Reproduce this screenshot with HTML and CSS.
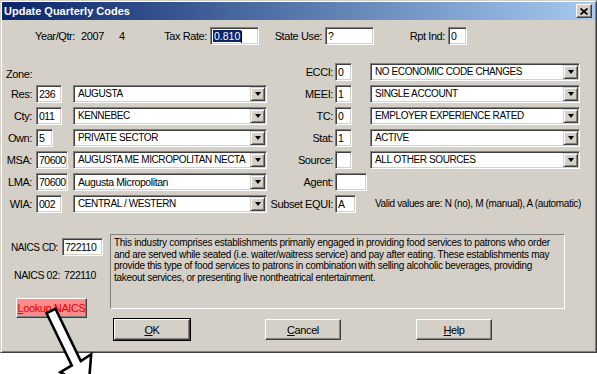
FILE: index.html
```html
<!DOCTYPE html>
<html lang="en">
<head>
    <meta charset="UTF-8">
    <title>Update Quarterly Codes</title>
    <link rel="stylesheet" href="styles.css">
</head>
<body>
    <div class="window">
        <div class="titlebar">
            <span class="title">Update Quarterly Codes</span>
            <span class="close-btn">
                <svg width="8" height="7" viewBox="0 0 8 7"><path d="M0.5 0.5L7.5 6.5M7.5 0.5L0.5 6.5" stroke="#000" stroke-width="1.7"/></svg>
            </span>
        </div>
        <div class="dialog">
            <div class="top-row">
                <span class="yq-label">Year/Qtr:</span>
                <span class="yq-year">2007</span>
                <span class="yq-qtr">4</span>
                <span class="top-label tax-label">Tax Rate:</span>
                <span class="field tax-field"><span class="selected">0.810</span><span class="caret"></span></span>
                <span class="top-label state-label">State Use:</span>
                <span class="field state-field">?</span>
                <span class="top-label rpt-label">Rpt Ind:</span>
                <span class="field rpt-field">0</span>
            </div>

            <div class="codes">
                <div class="zone">Zone:</div>
                <div class="lbl">ECCI:</div>
                <div class="cell"><span class="field w17">0</span></div>
                <div class="combo"><span class="combo-text">NO ECONOMIC CODE CHANGES</span><span class="drop"><i></i></span></div>

                <div class="lbl">Res:</div>
                <div class="cell left"><span class="field w25">236</span></div>
                <div class="combo"><span class="combo-text">AUGUSTA</span><span class="drop"><i></i></span></div>
                <div class="lbl">MEEI:</div>
                <div class="cell"><span class="field w17">1</span></div>
                <div class="combo"><span class="combo-text">SINGLE ACCOUNT</span><span class="drop"><i></i></span></div>

                <div class="lbl">Cty:</div>
                <div class="cell left"><span class="field w25">011</span></div>
                <div class="combo"><span class="combo-text">KENNEBEC</span><span class="drop"><i></i></span></div>
                <div class="lbl">TC:</div>
                <div class="cell"><span class="field w17">0</span></div>
                <div class="combo"><span class="combo-text">EMPLOYER EXPERIENCE RATED</span><span class="drop"><i></i></span></div>

                <div class="lbl">Own:</div>
                <div class="cell left"><span class="field w17">5</span></div>
                <div class="combo"><span class="combo-text">PRIVATE SECTOR</span><span class="drop"><i></i></span></div>
                <div class="lbl">Stat:</div>
                <div class="cell"><span class="field w17">1</span></div>
                <div class="combo"><span class="combo-text">ACTIVE</span><span class="drop"><i></i></span></div>

                <div class="lbl">MSA:</div>
                <div class="cell left"><span class="field w32">70600</span></div>
                <div class="combo"><span class="combo-text">AUGUSTA ME MICROPOLITAN NECTA</span><span class="drop"><i></i></span></div>
                <div class="lbl">Source:</div>
                <div class="cell"><span class="field w17"></span></div>
                <div class="combo"><span class="combo-text">ALL OTHER SOURCES</span><span class="drop"><i></i></span></div>

                <div class="lbl">LMA:</div>
                <div class="cell left"><span class="field w32">70600</span></div>
                <div class="combo"><span class="combo-text mixed">Augusta Micropolitan</span><span class="drop"><i></i></span></div>
                <div class="lbl">Agent:</div>
                <div class="cell"><span class="field w32"></span></div>
                <div></div>

                <div class="lbl">WIA:</div>
                <div class="cell left"><span class="field w25">002</span></div>
                <div class="combo"><span class="combo-text">CENTRAL / WESTERN</span><span class="drop"><i></i></span></div>
                <div class="lbl">Subset EQUI:</div>
                <div class="cell"><span class="field w21">A</span></div>
                <div class="hint">Valid values are: N (no), M (manual), A (automatic)</div>
            </div>

            <div class="naics">
                <div class="naics-side">
                    <div class="naics-cd">
                        <span class="naics-cd-label">NAICS CD:</span>
                        <span class="field naics-field">722110</span>
                    </div>
                    <div class="naics-02">
                        <span class="naics-02-label">NAICS 02:</span>
                        <span>722110</span>
                    </div>
                    <button class="lookup"><u>L</u>ookup NAICS</button>
                </div>
                <div class="naics-main">
                    <div class="desc">This industry comprises establishments primarily engaged in providing food services to patrons who order<br>and are served while seated (i.e. waiter/waitress service) and pay after eating. These establishments may<br>provide this type of food services to patrons in combination with selling alcoholic beverages, providing<br>takeout services, or presenting live nontheatrical entertainment.</div>
                    <div class="buttons">
                        <button class="btn btn-default"><u>O</u>K</button>
                        <button class="btn"><u>C</u>ancel</button>
                        <button class="btn"><u>H</u>elp</button>
                    </div>
                </div>
            </div>
        </div>
    </div>

    <svg class="arrow" width="597" height="374" viewBox="0 0 597 374">
        <polygon points="46.5,313.2 55.5,308.8 80.8,361 91.2,354.2 88.5,388 60.4,372.2 71.8,365.4" fill="#fff" stroke="#000" stroke-width="2.6" stroke-linejoin="miter"/>
    </svg>
</body>
</html>
```

FILE: styles.css
```css
body {
    margin: 0;
    background: #fff;
    font-family: "Liberation Sans", Arial, sans-serif;
    font-size: 11px;
    letter-spacing: -0.4px;
    color: #000;
    position: relative;
    width: 597px;
    height: 374px;
    overflow: hidden;
}
.window {
    width: 597px;
    box-sizing: border-box;
    background: #d4d0c8;
    border: 1px solid;
    border-color: #d4d0c8 #404040 #404040 #d4d0c8;
    box-shadow: inset 1px 1px #fff, inset -1px -1px #808080;
    padding: 1px;
}
.titlebar {
    height: 18px;
    display: flex;
    align-items: center;
    justify-content: space-between;
    background: linear-gradient(to right, #0a246a, #a6caf0);
    padding: 0 3px 0 2px;
}
.title {
    color: #fff;
    font-weight: bold;
    letter-spacing: 0;
}
.close-btn {
    width: 16px;
    height: 14px;
    box-sizing: border-box;
    display: flex;
    align-items: center;
    justify-content: center;
    background: #d4d0c8;
    border: 1px solid;
    border-color: #fff #404040 #404040 #fff;
    box-shadow: inset -1px -1px #808080;
}
.dialog {
    padding: 7px 0 11px 2px;
}

/* sunken edit box */
.field {
    display: block;
    height: 18px;
    box-sizing: border-box;
    background: #fff;
    border: 1px solid;
    border-color: #808080 #fff #fff #808080;
    box-shadow: inset 1px 1px #404040, inset -1px -1px #d4d0c8;
    padding-left: 2px;
    font-size: 10.5px;
    letter-spacing: -0.5px;
    line-height: 16px;
    white-space: nowrap;
    overflow: hidden;
}
.w17 { width: 17px; }
.w21 { width: 21px; }
.w25 { width: 26px; }
.w32 { width: 32px; }

.top-row {
    display: flex;
    align-items: center;
    height: 18px;
}
.yq-label {
    margin-left: 31px;
    width: 46px;
}
.yq-year { width: 38px; }
.yq-qtr { width: 10px; }
.top-label {
    text-align: right;
    box-sizing: border-box;
    padding-right: 3px;
}
.tax-label { width: 81px; }
.tax-field { width: 49px; }
.state-label { width: 66px; }
.state-field { width: 49px; }
.rpt-label { width: 74px; }
.rpt-field { width: 19px; }
.selected {
    background: #0a246a;
    color: #fff;
    padding: 0 1px;
    letter-spacing: 0;
}
.caret {
    display: inline-block;
    width: 1px;
    height: 12px;
    background: #000;
    vertical-align: middle;
}

.codes {
    display: grid;
    grid-template-columns: 30px 39px 194px 68px 35px 210px;
    grid-auto-rows: 18px;
    row-gap: 4px;
    margin-top: 18px;
}
.zone {
    grid-column: span 3;
    align-self: end;
    padding-left: 2px;
    line-height: 14px;
}
.lbl {
    text-align: right;
    padding-right: 2px;
    line-height: 18px;
    white-space: nowrap;
}
.cell.left { padding-left: 2px; }
.combo {
    display: flex;
    height: 18px;
    box-sizing: border-box;
    background: #fff;
    border: 1px solid;
    border-color: #808080 #fff #fff #808080;
    box-shadow: inset 1px 1px #404040, inset -1px -1px #d4d0c8;
    padding: 1px;
}
.combo-text {
    flex: 1;
    padding-left: 3px;
    line-height: 14px;
    font-size: 10px;
    letter-spacing: -0.4px;
    white-space: nowrap;
    overflow: hidden;
}
.combo-text.mixed {
    font-size: 10.5px;
    letter-spacing: -0.4px;
}
.drop {
    width: 15px;
    height: 14px;
    box-sizing: border-box;
    display: flex;
    align-items: center;
    justify-content: center;
    background: #d4d0c8;
    border: 1px solid;
    border-color: #d4d0c8 #404040 #404040 #d4d0c8;
    box-shadow: inset 1px 1px #fff, inset -1px -1px #808080;
}
.drop i {
    width: 0;
    height: 0;
    border-top: 4px solid #000;
    border-left: 3.5px solid transparent;
    border-right: 3.5px solid transparent;
}
.hint {
    padding-left: 5px;
    line-height: 18px;
    font-size: 10px;
    letter-spacing: -0.35px;
    white-space: nowrap;
}

.naics {
    display: flex;
    margin-top: 21px;
}
.naics-side {
    width: 106px;
    font-size: 10.5px;
}
.naics-cd {
    display: flex;
    align-items: center;
    margin-top: 4px;
}
.naics-cd-label {
    width: 58px;
    box-sizing: border-box;
    padding-left: 7px;
    font-size: 10px;
    white-space: nowrap;
}
.naics-field {
    width: 41px;
}
.naics-02 {
    display: flex;
    margin-top: 12px;
    line-height: 14px;
    white-space: nowrap;
}
.naics-02-label {
    width: 60px;
    box-sizing: border-box;
    padding-left: 10px;
}
.lookup {
    display: block;
    margin: 16px 0 0 12px;
    width: 71px;
    height: 20px;
    padding: 0;
    font-family: inherit;
    font-size: 11px;
    letter-spacing: -0.4px;
    white-space: nowrap;
    color: #e60000;
    background: #ff8c8c;
    border: 1px solid;
    border-color: #fff #404040 #404040 #fff;
    box-shadow: inset -1px -1px #808080;
}
.naics-main {
    width: 455px;
}
.desc {
    height: 75px;
    box-sizing: border-box;
    border: 1px solid;
    border-color: #808080 #fff #fff #808080;
    padding: 2px 3px;
    line-height: 11.7px;
    font-size: 10px;
    letter-spacing: -0.3px;
    white-space: nowrap;
    overflow: hidden;
}
.buttons {
    display: flex;
    gap: 75px;
    margin-top: 10px;
    padding-left: 4px;
}
.btn {
    width: 76px;
    height: 21px;
    padding: 0;
    font: inherit;
    letter-spacing: inherit;
    color: #000;
    background: #d4d0c8;
    border: 1px solid;
    border-color: #fff #404040 #404040 #fff;
    box-shadow: inset -1px -1px #808080;
}
.btn-default {
    outline: 1px solid #000;
}

.arrow {
    position: absolute;
    left: 0;
    top: 0;
    pointer-events: none;
}
```
